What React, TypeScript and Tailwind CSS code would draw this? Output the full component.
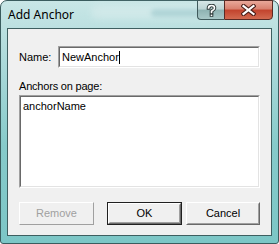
import React from "react";

const sunken =
  "border border-t-[#a0a0a0] border-l-[#a0a0a0] border-b-white border-r-white";
const sunkenInner =
  "border border-t-[#696969] border-l-[#696969] border-b-[#e3e3e3] border-r-[#e3e3e3]";

function Button({
  label,
  disabled,
  isDefault,
  w,
}: {
  label: string;
  disabled?: boolean;
  isDefault?: boolean;
  w: string;
}) {
  if (disabled) {
    return (
      <div
        className={`${w} h-[23px] border border-t-white border-l-white border-b-[#a0a0a0] border-r-[#a0a0a0] bg-[#f0f0f0] flex items-center justify-center text-[#a0a0a0]`}
      >
        {label}
      </div>
    );
  }
  if (isDefault) {
    return (
      <div className={`${w} h-[23px] border border-[#202020] bg-[#f0f0f0]`}>
        <div className="w-full h-full border border-t-white border-l-white border-b-[#696969] border-r-[#696969]">
          <div className="w-full h-full border border-t-[#f0f0f0] border-l-[#f0f0f0] border-b-[#a0a0a0] border-r-[#a0a0a0] flex items-center justify-center text-black">
            {label}
          </div>
        </div>
      </div>
    );
  }
  return (
    <div
      className={`${w} h-[23px] border border-t-white border-l-white border-b-[#696969] border-r-[#696969] bg-[#f0f0f0]`}
    >
      <div className="w-full h-full border border-t-[#f0f0f0] border-l-[#f0f0f0] border-b-[#a0a0a0] border-r-[#a0a0a0] flex items-center justify-center text-black">
        {label}
      </div>
    </div>
  );
}

export default function App() {
  return (
    <div className="w-[279px] h-[244px] overflow-hidden bg-white">
      <div className="relative w-[279px] h-[244px] rounded-t-[7px] rounded-b-[3px] border border-[#3a5c5e] bg-[linear-gradient(180deg,#c8e6e6_0%,#b2dcdc_20%,#86caca_60%,#7cc6c6_100%)] flex flex-col">
        {/* glass streaks */}
        <div className="absolute left-[90px] top-[4px] w-[120px] h-[14px] rounded-full bg-[#d8ecec] opacity-60 blur-[3px]" />
        <div className="absolute left-[150px] top-[8px] w-[60px] h-[8px] rounded-full bg-[#9cc8cc] opacity-60 blur-[2px]" />
        {/* title bar */}
        <div className="h-[27px] flex items-start relative">
          <span
            className="ml-[7px] mt-[6px] text-[12px] leading-[15px] text-black"
            style={{ fontFamily: '"Noto Sans", "Open Sans", sans-serif' }}
          >
            Add Anchor
          </span>
          {/* caption buttons */}
          <div className="absolute left-[196px] top-[-1px] flex">
            <div className="w-[27px] h-[20px] rounded-bl-[4px] border border-[#3f5a5c] border-r-0 bg-[linear-gradient(180deg,#d6e6e6_0%,#bcd4d4_45%,#8eb2b2_50%,#a8c8c8_100%)] flex items-center justify-center">
              <svg width="11" height="13" viewBox="0 0 11 13">
                <path
                  d="M2.5 4 Q2.5 1.5 5.5 1.5 Q8.5 1.5 8.5 4 Q8.5 5.5 6.5 6.5 L5.5 7.2 L5.5 8.5"
                  fill="none"
                  stroke="#2d3a3a"
                  strokeWidth="3.6"
                  strokeLinecap="square"
                />
                <rect x="3.7" y="9.8" width="3.6" height="3" fill="#2d3a3a" />
                <path
                  d="M2.5 4 Q2.5 1.5 5.5 1.5 Q8.5 1.5 8.5 4 Q8.5 5.5 6.5 6.5 L5.5 7.2 L5.5 8.5"
                  fill="none"
                  stroke="#ffffff"
                  strokeWidth="1.6"
                  strokeLinecap="square"
                />
                <rect x="4.7" y="10.6" width="1.6" height="1.5" fill="#ffffff" />
              </svg>
            </div>
            <div className="w-[49px] h-[20px] rounded-br-[4px] border border-[#5a2a24] bg-[linear-gradient(180deg,#e9a89a_0%,#d8806e_45%,#c2432d_50%,#d26a50_100%)] flex items-center justify-center">
              <svg width="15" height="12" viewBox="0 0 15 12">
                <path
                  d="M2.5 2 L12.5 10 M12.5 2 L2.5 10"
                  stroke="#4a1e18"
                  strokeWidth="4.2"
                  strokeLinecap="square"
                />
                <path
                  d="M2.5 2 L12.5 10 M12.5 2 L2.5 10"
                  stroke="#ffffff"
                  strokeWidth="2.2"
                  strokeLinecap="square"
                />
              </svg>
            </div>
          </div>
        </div>
        {/* client area */}
        <div className="mx-[6px] w-[265px] h-[208px] border border-[#3e5f60] bg-[#f0f0f0] px-[11px] pt-[17px]">
          <div
            className="flex flex-col text-[11px] leading-[13px] text-black"
            style={{ fontFamily: '"Liberation Sans", Arial, sans-serif' }}
          >
            <div className="flex items-center h-[22px]">
              <span className="w-[39px]">Name:</span>
              <div className={`flex-1 h-[22px] ${sunken}`}>
                <div className={`w-full h-full ${sunkenInner} bg-white flex items-center pl-[2px]`}>
                  <span>NewAnchor</span>
                  <span className="w-[1px] h-[13px] bg-black" />
                </div>
              </div>
            </div>
            <div className="mt-[12px] h-[13px] tracking-[-0.2px]">Anchors on page:</div>
            <div className={`mt-[2px] h-[93px] ${sunken}`}>
              <div className={`w-full h-full ${sunkenInner} bg-white px-[2px] pt-[3px]`}>
                <div className="leading-[13px]">anchorName</div>
              </div>
            </div>
            <div className="mt-[14px] flex">
              <Button label="Remove" disabled w="w-[75px]" />
              <div className="w-[13px]" />
              <Button label="OK" isDefault w="w-[75px]" />
              <div className="w-[4px]" />
              <Button label="Cancel" w="w-[74px]" />
            </div>
          </div>
        </div>
      </div>
    </div>
  );
}
